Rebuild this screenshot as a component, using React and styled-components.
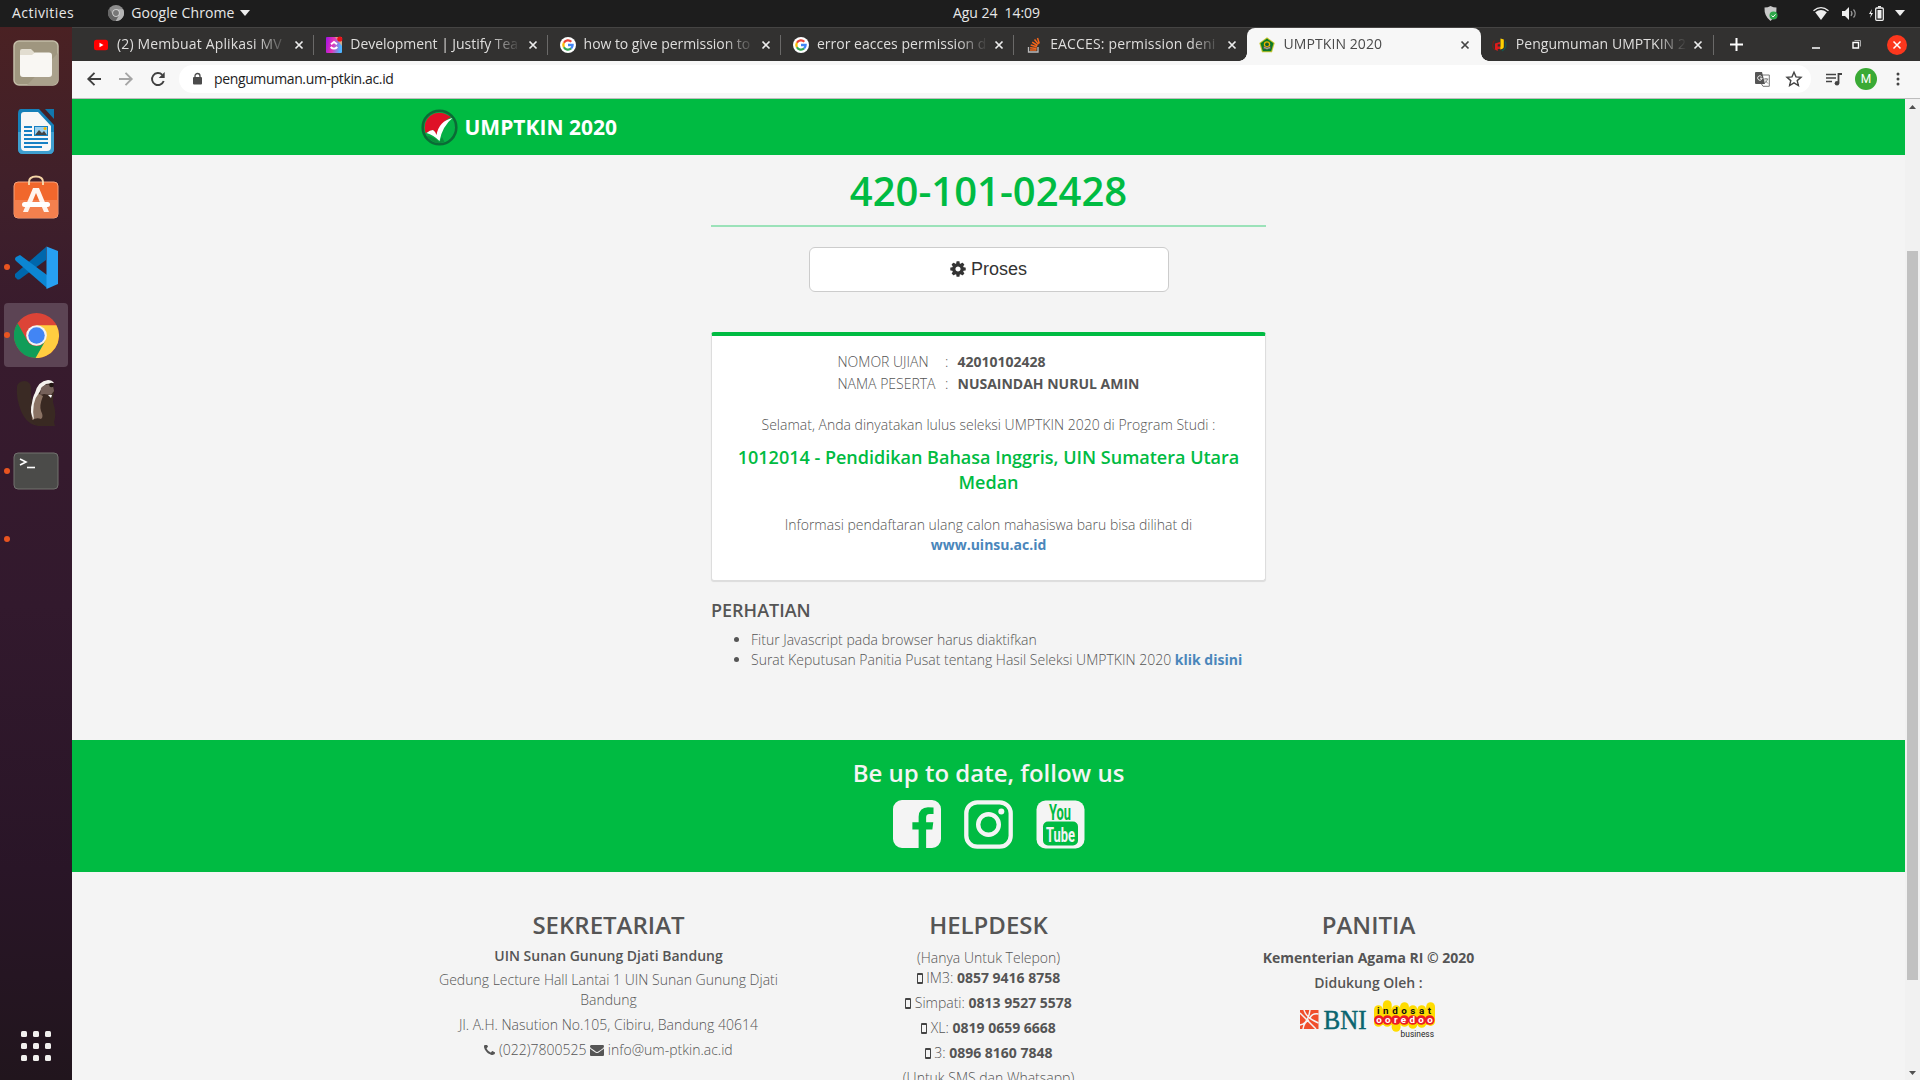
import React from "react";
import styled, { createGlobalStyle } from "styled-components";

const GREEN = "#00bb42";
const UI = '"Open Sans", "Noto Sans", sans-serif';

const Global = createGlobalStyle`
  * { box-sizing: border-box; }
  body { margin: 0; background: #1d1d1d; overflow: hidden; font-family: ${UI}; }
  p, h1, h2, h3, h4, ul { margin: 0; padding: 0; }
`;

/* ---------- desktop shell ---------- */
const Desktop = styled.div`
  width: 1920px; height: 1080px; display: flex; flex-direction: column; overflow: hidden;
`;
const TopBar = styled.header`
  height: 27px; flex: none; background: #1d1d1d; color: #e8e8e8;
  display: grid; grid-template-columns: 941px auto 1fr; align-items: center;
  font-size: 14px; line-height: 26px; padding: 0 13px 1px 12px;
`;
const TopLeft = styled.div`display: flex; align-items: center;`;
const TopRight = styled.div`display: flex; align-items: center; justify-content: flex-end; height: 26px;`;
const Label = styled.span`
  white-space: pre; letter-spacing: ${(p) => p.$track || 0}px; margin-left: ${(p) => p.$left || 0}px;
`;
const Glyph = styled.svg`
  display: block; flex: none; margin-left: ${(p) => p.$left || 0}px; overflow: visible;
`;
const Body = styled.div`flex: 1; display: flex; min-height: 0;`;

const Dock = styled.nav`
  width: 72px; flex: none; display: flex; flex-direction: column; padding-top: 2px;
  background: linear-gradient(180deg, #4a2123 0%, #40202a 15%, #381b2d 28%, #32192d 55%, #291527 80%, #21151d 100%);
`;
const Slot = styled.div`
  height: 68px; display: grid; grid-template-columns: 72px; justify-items: center; align-items: center;
  position: relative;
`;
const SlotFace = styled.div`
  width: 64px; height: 64px; border-radius: 4px; display: flex; align-items: center; justify-content: center;
  background: ${(p) => (p.$active ? "#5c4454" : "transparent")};
  padding-bottom: ${(p) => p.$lift || 0}px; padding-top: ${(p) => p.$drop || 0}px;
`;
const RunDot = styled.i`
  position: absolute; left: 4px; top: 31px; width: 6px; height: 6px; border-radius: 50%; background: #e95420;
`;
const AppGrid = styled.div`
  margin-top: auto; display: grid; grid-template-columns: repeat(3, 6px); gap: 6px;
  padding: 0 0 19px 21px;
`;
const AppDot = styled.i`width: 6px; height: 6px; border-radius: 1.5px; background: #f1f0ee;`;

/* ---------- browser ---------- */
const Browser = styled.div`flex: 1; display: flex; flex-direction: column; min-width: 0;`;
const TabStrip = styled.div`
  height: 34px; flex: none; background: #323130; border-top: 1px solid #454443;
  display: flex; padding-left: 9px;
`;
const TabBox = styled.div`
  width: 233.3px; height: 33px; flex: none; display: flex; align-items: center; position: relative;
  padding: 0 6px 0 ${(p) => p.$inset}px;
  color: ${(p) => (p.$active ? "#4a4a4a" : "#dfdedd")};
  background: ${(p) => (p.$active ? "#f7f7f7" : "transparent")};
  border-radius: 8px 8px 0 0;
  &::before, &::after {
    content: ""; display: ${(p) => (p.$active ? "block" : "none")};
    position: absolute; bottom: 0; width: 8px; height: 8px;
  }
  &::before { left: -8px; background: radial-gradient(circle at 0 0, transparent 7.5px, #f7f7f7 8px); }
  &::after { right: -8px; background: radial-gradient(circle at 100% 0, transparent 7.5px, #f7f7f7 8px); }
`;
const TabTitle = styled.span`
  flex: none; width: 174px; margin-left: 8px; white-space: nowrap; font-size: 14px; line-height: 30px;
  letter-spacing: ${(p) => p.$track || 0}px; height: 32px;
  mask-image: linear-gradient(90deg, #000 140px, transparent 171px);
`;
const TabDivider = styled.i`width: 1px; height: 20px; align-self: center; margin-left: -1px; background: #6a6968;`;
const WindowTools = styled.div`flex: 1; display: flex; align-items: center; padding: 0 13px 0 14px;`;

const Toolbar = styled.div`
  height: 38px; flex: none; background: #f7f7f7; border-bottom: 1px solid #bdbdbd;
  display: flex; align-items: center; padding: 0 14px 1px;
`;
const Omnibox = styled.div`
  height: 28px; flex: none; width: 1632px; margin-left: 14px; border-radius: 14px; background: #fff;
  display: flex; align-items: center; padding: 0 9px 0 12px; font-size: 14px; color: #222; line-height: 26px;
`;
const Push = styled.i`flex: 1;`;
const Avatar = styled.div`
  width: 22px; height: 22px; border-radius: 50%; background: #3aaa35; color: #fff;
  font: 12px/22px Roboto, sans-serif; text-align: center; margin-left: 13px;
`;

/* ---------- page ---------- */
const Viewport = styled.div`flex: 1; display: flex; min-height: 0;`;
const Page = styled.main`
  flex: 1; background: #f4f4f4; overflow: hidden; color: #555; display: flex; flex-direction: column;
  font: 300 14px/20px "Open Sans", sans-serif; align-items: center;
`;
const Band = styled.div`width: 100%; background: ${GREEN}; flex: none;`;
const NavBand = styled(Band)`
  height: 56px; display: flex; align-items: center; padding: 0 0 0 348.5px;
`;
const Brand = styled.span`
  color: #fff; font-weight: 700; font-size: 21px; line-height: 28px; margin: 0 0 0 7px;
`;
const Result = styled.section`width: 555px; height: 585px; flex: none; padding-top: 14px;`;
const ExamNo = styled.h1`
  font-size: 40px; line-height: 44px; font-weight: 600; color: ${GREEN}; text-align: center;
  padding-bottom: 12px; border-bottom: 2px solid #9be2b9; height: 58px;
`;
const ProcessButton = styled.button`
  display: flex; align-items: center; justify-content: center; gap: 4px;
  width: 360px; height: 45px; margin: 20px auto 0; padding: 0 1px 2px 0; border: 1px solid #ccc; border-radius: 6px;
  background: #fff; color: #333; font: 18px/24px "Liberation Sans", Arial, sans-serif;
`;
const Card = styled.div`
  height: 249px; margin-top: 40px; background: #fff; border-radius: 3px; border: 1px solid #ddd; border-top: 4px solid ${GREEN};
  box-shadow: 0 1px 1px rgba(0, 0, 0, 0.1); padding: 15px 20px 0; text-align: center;
`;
const Facts = styled.dl`
  display: grid; grid-template-columns: 107.5px 12.5px auto; grid-auto-rows: 22px; line-height: 22px;
  margin: 0 0 20px; padding-left: 105.5px; text-align: left;
`;
const Term = styled.dt``;
const Value = styled.dd`margin: 0; font-weight: 700;`;
const Program = styled.h4`
  font-size: 18px; line-height: 25px; font-weight: 600; color: ${GREEN}; margin: 10px -4px 20px;
`;
const Line = styled.p`
  line-height: 20px; margin-top: ${(p) => p.$top || 0}px; white-space: nowrap;
  font-weight: ${(p) => p.$weight || 300};
`;
const Link = styled.a`color: #4a86bb; font-weight: 700;`;
const Notice = styled.h4`font-size: 18px; line-height: 20px; font-weight: 600; margin: 19px 0 10px;`;
const Bullets = styled.ul`padding-left: 40px; line-height: 20px;`;

const SocialBand = styled(Band)`
  height: 132px; color: #f4f4f4; text-align: center; padding-top: 19px;
`;
const SocialTitle = styled.h3`font-size: 24px; line-height: 27px; font-weight: 600;`;
const SocialIcons = styled.div`display: flex; justify-content: center; gap: 23px; margin-top: 14px;`;

const Footer = styled.footer`
  width: 1140px; display: grid; grid-template-columns: repeat(3, 380px); padding-top: 39px; text-align: center; flex: none;
`;
const Col = styled.div``;
const ColTitle = styled.h3`font-size: 24px; line-height: 27px; font-weight: 600; margin-bottom: ${(p) => p.$gap}px;`;
const Strong = styled.b`font-weight: 700;`;
const InlineIcon = styled.svg`display: inline-block; vertical-align: ${(p) => p.$drop || -1}px;`;
const Logos = styled.div`display: flex; justify-content: center; align-items: flex-start; gap: 7px; margin: 7px 0 0 -3px;`;

const Scroll = styled.div`
  width: 15px; flex: none; background: #f1f1f1; display: flex; flex-direction: column; align-items: center;
  padding: 6px 0 5px;
`;
const Thumb = styled.i`width: 11px; height: 729px; margin: 142px 0 auto; background: #c1c1c1;`;

/* ---------- icons ---------- */
const Fa = ({ d, size }) => (
  <svg width={size} height={size} viewBox="0 0 1792 1792" fill="currentColor"><path d={d} /></svg>
);
const COG = "M1152 896q0-106-75-181t-181-75-181 75-75 181 75 181 181 75 181-75 75-181zm512-109v222q0 12-8 23t-20 13l-185 28q-19 54-39 91 35 50 107 138 10 12 10 25t-9 23q-27 37-99 108t-94 71q-12 0-26-9l-138-108q-44 23-91 38-16 136-29 186-7 28-36 28h-222q-14 0-24.5-8.5t-11.5-21.5l-28-184q-49-16-90-37l-141 107q-10 9-25 9-14 0-25-11-126-114-165-168-7-10-7-23 0-12 8-23 15-21 51-66.5t54-70.5q-27-50-41-99l-183-27q-13-2-21-12.5t-8-23.5v-222q0-12 8-23t19-13l186-28q14-46 39-92-40-57-107-138-10-12-10-24 0-10 9-23 26-36 98.5-107.5t94.5-71.5q13 0 26 10l138 107q44-23 91-38 16-136 29-186 7-28 36-28h222q14 0 24.5 8.5t11.5 21.5l28 184q49 16 90 37l142-107q9-9 24-9 13 0 25 10 129 119 165 170 7 8 7 22 0 12-8 23-15 21-51 66.5t-54 70.5q26 50 41 98l183 28q13 2 21 12.5t8 23.5z";
const FACEBOOK = "M1376 128q119 0 203.5 84.5t84.5 203.5v960q0 119-84.5 203.5t-203.5 84.5h-188v-595h199l30-232h-229v-148q0-56 23.5-84t91.5-28l122-1v-207q-63-9-178-9-136 0-217.5 80t-81.5 226v171h-200v232h200v595h-532q-119 0-203.5-84.5t-84.5-203.5v-960q0-119 84.5-203.5t203.5-84.5h960z";
const PHONE = "M1600 1240q0 27-10 70.5t-21 68.5q-21 50-122 106-94 51-186 51-27 0-53-3.5t-57.5-12.5-47-14.5-55.5-20.5-49-18q-98-35-175-83-127-79-264-216t-216-264q-48-77-83-175-3-9-18-49t-20.5-55.5-14.5-47-12.5-57.5-3.5-53q0-92 51-186 56-101 106-122 25-11 68.5-21t70.5-10q14 0 21 3 18 6 53 76 11 19 30 54t35 63.5 31 53.5q3 4 17.5 25t21.5 35.5 7 28.5q0 20-28.5 50t-62 55-62 53-28.5 46q0 9 5 22.5t8.5 20.5 14 24 11.5 19q76 137 174 235t235 174q2 1 19 11.5t24 14 20.5 8.5 22.5 5q18 0 46-28.5t53-62 55-62 50-28.5q14 0 28.5 7t35.5 21.5 25 17.5q25 15 53.5 31t63.5 35 54 30q70 35 76 53 3 7 3 21z";
const MAIL = "M1792 710v794q0 66-47 113t-113 47h-1472q-66 0-113-47t-47-113v-794q44 49 101 87 362 246 497 345 57 42 92.500 65.500t94.500 48 110 24.500h2q51 0 110-24.500t94.500-48 92.500-65.500q170-123 498-345 57-39 100-87zm0-294q0 79-49 151t-122 123q-376 261-468 325-10 7-42.500 31t-54 38.500-52 32.500-57.500 27-50 9h-2q-23 0-50-9t-57.500-27-52-32.500-54-38.500-42.500-31q-91-64-262-182.500t-205-142.500q-62-42-117-115.500t-55-136.500q0-78 41.500-130t118.500-52h1472q65 0 112.500 47t47.500 113z";

const Caret = ({ left }) => (
  <Glyph $left={left} width="10" height="6" viewBox="0 0 10 6"><path d="M0 0h10L5 6z" fill="#eee" /></Glyph>
);
const Close = ({ color = "#ececec", left = 4 }) => (
  <Glyph $left={left} width="8" height="8" viewBox="0 0 8 8"><path d="M.5.5l7 7M7.500.5l-7 7" stroke={color} strokeWidth="1.700" /></Glyph>
);
const GoogleG = () => (
  <Glyph width="16" height="16" viewBox="0 0 16 16">
    <circle cx="8" cy="8" r="8" fill="#fff" />
    <g fill="none" strokeWidth="2.300">
      <path d="M11.300 4.800A4.700 4.700 0 0 0 3.900 5.800" stroke="#ea4335" />
      <path d="M3.900 5.800a4.700 4.700 0 0 0 0 4.400" stroke="#fbbc05" />
      <path d="M3.900 10.200a4.700 4.700 0 0 0 7.200 1.200" stroke="#34a853" />
      <path d="M11.100 11.400A4.500 4.500 0 0 0 12.600 8H8" stroke="#4285f4" />
    </g>
  </Glyph>
);
const YouTubeTab = () => (
  <Glyph width="16" height="16" viewBox="0 0 16 16">
    <rect x="1" y="2.700" width="14" height="10.600" rx="2.500" fill="#f00" /><path d="M6.500 5.700v4.600l4-2.300z" fill="#fff" />
  </Glyph>
);
const ClickUp = () => (
  <Glyph width="16" height="16" viewBox="0 0 16 16">
    <defs><linearGradient id="cu" x1="0" x2="1" y2=".2"><stop offset="0" stopColor="#a012e8" /><stop offset=".5" stopColor="#e633b4" /><stop offset="1" stopColor="#4fb3ff" /></linearGradient></defs>
    <rect width="16" height="16" rx="1" fill="url(#cu)" />
    <path d="M9 0h7v9z" fill="#ffad5c" opacity=".7" />
    <path d="M5 7.300L8 4.900l3 2.400M4.700 10c2 2.200 4.600 2.200 6.600 0" fill="none" stroke="#fff" strokeWidth="1.900" />
    <circle cx="13.800" cy="2" r="2.600" fill="#e8131c" />
  </Glyph>
);
const StackOverflow = () => (
  <Glyph width="16" height="16" viewBox="0 0 16 16">
    <path d="M2.500 10v5h9.500v-5" fill="none" stroke="#bcbbbb" strokeWidth="1.300" />
    <path d="M4 13h6.500M4.100 10.700l6.500.7M4.700 8l6.200 1.800M6.200 5.200l5.300 3.300M8.500 2.600l4 4.700M11.500 1l1.800 5.500" stroke="#f4661b" strokeWidth="1.500" />
  </Glyph>
);
const Kemenag = () => (
  <Glyph width="16" height="16" viewBox="0 0 16 16">
    <path d="M8 .3l7.700 5.600-2.700 9.400H3L.3 5.900z" fill="#c8c72e" />
    <path d="M8 1.500l6.500 4.800-2.300 8H3.800l-2.300-8z" fill="#0b7a26" />
    <circle cx="8" cy="7.500" r="3.200" fill="#e8b400" /><circle cx="8" cy="7.300" r="1.900" fill="#16602a" />
    <path d="M4.500 9.500c2 .2 2.500.6 3.500 1.300 1-.7 1.500-1.100 3.500-1.300v2.200c-2 0-2.600.4-3.500 1-.9-.6-1.500-1-3.500-1z" fill="#a9a99c" stroke="#444" strokeWidth=".6" />
  </Glyph>
);
const Ptkin = () => (
  <Glyph width="16" height="16" viewBox="0 0 16 16">
    <path d="M2.500 3.500a6.500 6.500 0 0 0 .5 9.500" fill="none" stroke="#702018" strokeWidth="1.200" />
    <path d="M3 12.500V6.500L8 5v2.200H5.700v2.300H8.500V12H5.700v2z" fill="#e01b1b" />
    <path d="M8.500 1.500l3.300 1V9.500c0 1.700-1 2.700-3.500 2.900V10l.2-.6z" fill="#ffd000" />
    <path d="M13.300 4.500c1.500 4 .2 7.500-3.500 9.500" fill="none" stroke="#14584f" strokeWidth="1.200" />
  </Glyph>
);

const FilesIcon = () => (
  <svg width="46" height="46" viewBox="0 0 46 46">
    <rect x="1" y="1" width="44" height="44" rx="5" fill="#9f967f" stroke="#c4bda8" strokeWidth="1.500" />
    <path d="M45 13L14 45h26a5 5 0 0 0 5-5z" fill="#aaa18c" />
    <path d="M7 14V11q0-2 2-2h9l4 4h14v5H7z" fill="#e2ddd0" />
    <path d="M7 15h12l3-2.500h14q3 0 3 3V34q0 3-3 3H10q-3 0-3-3z" fill="#f9f7f3" />
  </svg>
);
const WriterIcon = () => (
  <svg width="40" height="46" viewBox="0 0 40 46">
    <path d="M5 0H23L38 16V40q0 5-5 5H7q-5 0-5-5V5q0-5 3-5z" fill="#1680b9" />
    <path d="M2 23h36v17q0 5-5 5H7q-5 0-5-5z" fill="#3f9fd0" />
    <path d="M8 3H22L35 17V38q0 4-4 4H9q-4 0-4-4V6q0-3 3-3z" fill="#f7f7f7" />
    <path d="M29 0h9v10z" fill="#1177ad" />
    <g fill="#1680c4"><path d="M8 17h8v2H8zM8 21h8v2H8zM8 25h8v2H8zM8 29h24v2H8zM8 33h24v2H8zM8 37h18v2H8z" /><rect x="18" y="17" width="14" height="10" /></g>
    <rect x="19" y="18" width="12" height="8" fill="#9cd0ee" /><path d="M19 26l4-5 3 3 2-2 3 4z" fill="#444" /><circle cx="29" cy="19.500" r="1.500" fill="#f6b900" />
  </svg>
);
const StoreIcon = () => (
  <svg width="46" height="46" viewBox="0 0 46 46">
    <rect x="1" y="8" width="44" height="36" rx="4" fill="#f1672c" stroke="#f7a37c" />
    <path d="M1.500 26h43v14q0 3.500-3.500 3.500H5q-3.500 0-3.500-3.500z" fill="#f4804e" />
    <path d="M16 11V8q0-5.500 7-5.500T30 8v3" fill="none" stroke="#f4d4a6" strokeWidth="2" />
    <path d="M20 14h6l10 24h-5L23 19l-8 19h-5z" fill="#fff4ee" /><rect x="9" y="28" width="28" height="5" rx="2.500" fill="#fff" />
  </svg>
);
const CodeIcon = () => (
  <svg width="43" height="43" viewBox="0 0 43 43">
    <path d="M0 31V28L31 1v13L5 33q-2 1-3 0z" fill="#0067ac" />
    <path d="M1 11l4-2 27 20v13L1 15q-2-2 0-4z" fill="#0c86d2" />
    <path d="M31.500.5L43 5v33l-11.500 5z" fill="#27a0f2" />
  </svg>
);
const ChromeIcon = ({ size, mono }) => {
  const c = mono ? ["#8d8d8d", "#666", "#b4b4b4", "#777", "#ddd"] : ["#dc4437", "#109d58", "#ffcd40", "#4285f4", "#f3f3f3"];
  return (
    <svg width={size} height={size} viewBox="0 0 48 48">
      <circle cx="24" cy="24" r="24" fill={c[0]} />
      <path d="M24 13H45.300A24 24 0 0 1 22 48L33 29z" fill={c[2]} />
      <path d="M3.800 11A24 24 0 0 0 23 48L33.500 29.500A11 11 0 0 1 14 29z" fill={c[1]} />
      <circle cx="24" cy="24" r="11" fill={c[4]} /><circle cx="24" cy="24" r="8.800" fill={c[3]} />
    </svg>
  );
};
const BeaverIcon = () => (
  <svg width="40" height="48" viewBox="0 0 40 48">
    <path d="M2 5Q4 2 9 2q6 1 6 7-1 9 3 16l5 22q-12-1-18-15Q0 19 1 8q0-2 1-3z" fill="#3a2a24" />
    <path d="M22 8q4-6 11-4 6 3 5 10-1 3-1 9 4 12 1 20l1 4H22q-10-5-7-18 2-9 7-21z" fill="#392922" />
    <path d="M21 14q-7 14-5 27 5-3 9-1 3-2 0-8-2-5 2-15z" fill="#8a7263" />
    <path d="M19 14Q22 2 32 1q4 0 6 3l-8 1q-4 3-7 9-8 9-5 27-5-8-2-17 1-7 3-10z" fill="#f5f2ee" />
    <path d="M25 9q5-6 12-2l1 5-3 4-7-1-4 1z" fill="#75615a" /><circle cx="35.500" cy="6" r="2.300" fill="#201612" /><path d="M32 16l4 0-1 3z" fill="#fff" />
  </svg>
);
const TermIcon = () => (
  <svg width="46" height="38" viewBox="0 0 46 38">
    <rect x="1" y="1" width="44" height="36" rx="4" fill="#4b4b49" stroke="#72726f" />
    <path d="M7 7l6 3-6 3" fill="none" stroke="#fff" strokeWidth="1.600" /><path d="M14 15.500h8" stroke="#fff" strokeWidth="1.600" />
  </svg>
);

const UmLogo = () => (
  <svg width="37" height="37" viewBox="0 0 37 37">
    <circle cx="18.500" cy="18.500" r="16.800" fill="#06b045" stroke="#0b6b36" strokeWidth="2.600" />
    <path d="M4.500 24Q1.500 13 9 7 18 0 30 8 20 13 15.500 26L12 21z" fill="#df1027" />
    <path d="M5.500 24q3.500-3 6.500-3Q15 23 15.500 26 18 12 31.500 9q-10 8-13 23-6-6-13-8z" fill="#fff" />
    <path d="M6 27q7 0 12.500 6.500L21 28l2.500 5Q13 37 6 27z" fill="#0b8a3a" />
  </svg>
);
const Instagram = () => (
  <svg width="49" height="49" viewBox="0 0 49 49" fill="none" stroke="#f4f4f4">
    <rect x="2.300" y="2.300" width="44.400" height="44.400" rx="11" strokeWidth="4.300" />
    <circle cx="24.500" cy="24.500" r="10.300" strokeWidth="4.400" /><circle cx="37.300" cy="11.600" r="3" fill="#f4f4f4" stroke="none" />
  </svg>
);
const YouTubeSquare = () => (
  <svg width="49" height="49" viewBox="0 0 49 49">
    <rect x="0.500" y="0.500" width="48" height="48" rx="9" fill="#f4f4f4" />
    <rect x="7" y="21.500" width="35" height="24" rx="5" fill={GREEN} />
    <g fontFamily="Roboto, sans-serif" fontWeight="700">
      <text x="13" y="19.500" fontSize="22" textLength="22" lengthAdjust="spacingAndGlyphs" fill={GREEN}>You</text>
      <text x="10" y="41.500" fontSize="21" textLength="29" lengthAdjust="spacingAndGlyphs" fill="#f4f4f4">Tube</text>
    </g>
  </svg>
);
const Mobile = () => (
  <InlineIcon $drop={-1} width="6" height="11" viewBox="0 0 6 11">
    <path fillRule="evenodd" d="M1 0h4q1 0 1 1v9q0 1-1 1H1q-1 0-1-1V1q0-1 1-1zM1 2v7h4V2z" fill="#444" />
  </InlineIcon>
);
const Bni = () => (
  <Glyph width="67" height="29" viewBox="0 -10 67 29">
    <rect width="18.500" height="19" fill="#f04e2b" />
    <path d="M0 3l16 16M4 0q2 8 14.500 13M0 15q8-1 10-15M9 10q-5 2-6 9M18.500 4q-7-1-9 5" stroke="#f4f4f4" strokeWidth="1.500" fill="none" />
    <text x="23.500" y="18.800" fontFamily="'Liberation Serif', serif" fontWeight="400" fontSize="28" textLength="43" lengthAdjust="spacingAndGlyphs" fill="#0a6570" stroke="#0a6570" strokeWidth=".5">BNI</text>
  </Glyph>
);
const Indosat = () => (
  <Glyph width="61" height="38" viewBox="0 0 62 38">
    <g fill="#ffdc00">
      {[[0, 5, 22], [9, 0, 27], [18, 5, 27], [26.5, 2, 25], [35, 5, 24], [44, 5, 23], [53, 2, 24]].map(([x, y, h]) => (
        <rect key={x} x={x} y={y} width="9" height={h} rx="4.500" />
      ))}
      <rect x="3" y="9" width="55" height="16" />
    </g>
    {[0, 1, 2, 3, 4, 5, 6].map((i) => <circle key={i} cx={5 + i * 8.600} cy="20" r="4.900" fill="#ed1c24" />)}
    <g fontFamily="Roboto, sans-serif" fontWeight="700">
      <text x="3" y="14" fontSize="10" textLength="55" fill="#111">indosat</text>
      <text x="2.200" y="23.300" fontSize="10" textLength="57.500" fill="#fff">ooredoo</text>
      <text x="27" y="36.800" fontSize="8.500" textLength="34" fontWeight="400" fill="#222">business</text>
    </g>
  </Glyph>
);

const tabs = [
  { title: "(2) Membuat Aplikasi MV", icon: <YouTubeTab />, inset: 12, track: 0.15 },
  { title: "Development | Justify Tea", icon: <ClickUp />, inset: 12, track: -0.05, closeLeft: 5 },
  { title: "how to give permission to", icon: <GoogleG />, inset: 12, track: -0.05 },
  { title: "error eacces permission d", icon: <GoogleG />, inset: 12, track: 0.02 },
  { title: "EACCES: permission deni", icon: <StackOverflow />, inset: 12, track: 0.15 },
  { title: "UMPTKIN 2020", icon: <Kemenag />, active: true, inset: 12, track: 0.08 },
  { title: "Pengumuman UMPTKIN 2", icon: <Ptkin />, inset: 11, track: 0.05 },
];
const dock = [
  { icon: <FilesIcon /> }, { icon: <WriterIcon />, drop: 1 }, { icon: <StoreIcon />, lift: 5 }, { icon: <CodeIcon />, run: true },
  { icon: <ChromeIcon size={45} />, run: true, active: true }, { icon: <BeaverIcon /> }, { icon: <TermIcon />, run: true }, { icon: null, run: true },
];
const phones = [["IM3:", "0857 9416 8758"], ["Simpati:", "0813 9527 5578"], ["XL:", "0819 0659 6668"], ["3:", "0896 8160 7848"]];

export default function App() {
  return (
    <Desktop>
      <Global />
      <TopBar>
        <TopLeft>
          <Label $track={0.45}>Activities</Label>
          <Glyph $left={34} width="16" height="16" viewBox="0 0 16 16"><ChromeIcon size={16} mono /></Glyph>
          <Label $left={7} $track={0.1}>Google Chrome</Label>
          <Caret left={5} />
        </TopLeft>
        <Label $track={-0.05}>{"Agu 24  14:09"}</Label>
        <TopRight>
          <Glyph width="14" height="15" viewBox="0 0 14 15">
            <path d="M6.500 0q3 1.500 6 1.500Q13 10 6.500 15 0 10 .5 1.500 4 1.500 6.500 0z" fill="#c9c9c9" /><circle cx="9.500" cy="9.500" r="4" fill="#2fa84a" /><path d="M7.600 9.500l1.500 1.500 2.400-2.700" stroke="#fff" fill="none" />
          </Glyph>
          <Glyph $left={35} width="16" height="13" viewBox="0 0 16 13"><path d="M.5 3.700Q8-2.500 15.500 3.700" fill="none" stroke="#eee" strokeWidth="1.300" /><path d="M2.200 5.200Q8 1 13.800 5.200L8 13z" fill="#eee" /></Glyph>
          <Glyph $left={13} width="15" height="13" viewBox="0 0 15 13"><path d="M0 4h3l4-4v13L3 9H0z" fill="#eee" /><path d="M9 4q2 2.500 0 5M11.500 2.500q3.500 4 0 8" fill="none" stroke="#999" strokeWidth="1.200" /></Glyph>
          <Glyph $left={12} width="15" height="15" viewBox="0 0 15 15"><path d="M3 3L0 8h2l-1 4 3-5H2z" fill="#eee" /><path d="M9 0h3v1.500H9z" fill="#eee" /><rect x="6.700" y="2" width="7.600" height="12.300" rx="1" fill="none" stroke="#eee" strokeWidth="1.300" /><path d="M8.500 4h4v8.500h-4z" fill="#eee" /></Glyph>
          <Caret left={11} />
          <Label $left={2} />
        </TopRight>
      </TopBar>
      <Body>
        <Dock>
          {dock.map((d, i) => (
            <Slot key={i}>{d.run && <RunDot />}<SlotFace $active={d.active} $lift={d.lift} $drop={d.drop}>{d.icon}</SlotFace></Slot>
          ))}
          <AppGrid>{Array.from({ length: 9 }, (_, i) => <AppDot key={i} />)}</AppGrid>
        </Dock>
        <Browser>
          <TabStrip>
            {tabs.map((t, i) => (
              <React.Fragment key={t.title}>
                <TabBox $active={t.active} $inset={t.inset}>
                  {t.icon}<TabTitle $track={t.track}>{t.title}</TabTitle><Close left={t.closeLeft} color={t.active ? "#444" : undefined} />
                </TabBox>
                {i !== 4 && i !== 5 && <TabDivider />}
              </React.Fragment>
            ))}
            <WindowTools>
              <Glyph $left={2} width="13" height="13" viewBox="0 0 13 13"><path d="M6.500 0v13M0 6.500h13" stroke="#fff" strokeWidth="2" /></Glyph>
              <Push />
              <Glyph width="8" height="10" viewBox="0 0 8 10"><path d="M0 8h8" stroke="#fff" strokeWidth="1.500" /></Glyph>
              <Glyph $left={32} width="9" height="9" viewBox="0 0 9 9"><path d="M1 2.500h5.500V8H1z" fill="none" stroke="#fff" strokeWidth="1.400" /><path d="M2.500.5h6v6" fill="none" stroke="#aaa" /></Glyph>
              <Glyph $left={26} width="20" height="20" viewBox="0 0 20 20"><circle cx="10" cy="10" r="10" fill="#fc371d" /><path d="M6.500 6.500l7 7m0-7l-7 7" stroke="#fff" strokeWidth="1.500" /></Glyph>
            </WindowTools>
          </TabStrip>
          <Toolbar>
            <Glyph $left={1} width="14" height="14" viewBox="0 0 14 14"><path d="M14 7H1.500M7.500.8L1.300 7l6.200 6.200" fill="none" stroke="#3f3f3f" strokeWidth="1.900" /></Glyph>
            <Glyph $left={18} width="14" height="14" viewBox="0 0 14 14"><path d="M0 7h12.500M6.500.8L12.700 7l-6.200 6.200" fill="none" stroke="#a5a5a5" strokeWidth="1.900" /></Glyph>
            <Glyph $left={18} width="14" height="14" viewBox="0 0 14 14"><path d="M12.700 9A6 6 0 1 1 11.300 2.800" fill="none" stroke="#3f3f3f" strokeWidth="1.900" /><path d="M13.700 0v6H7.700z" fill="#3f3f3f" /></Glyph>
            <Omnibox>
              <Glyph $left={2} width="9" height="12" viewBox="0 0 9 12"><rect y="4" width="9" height="7.500" rx="1" fill="#4b4b4b" /><path d="M2 5V3a2.500 2.500 0 0 1 5 0v2" fill="none" stroke="#4b4b4b" strokeWidth="1.300" /></Glyph>
              <Label $left={12} $track={-0.37}>pengumuman.um-ptkin.ac.id</Label>
              <Push />
              <Glyph width="15" height="15" viewBox="0 0 15 15">
                <path d="M6 3h8.300v11.300H8L6.500 12" fill="#fff" stroke="#777" /><path d="M0 1q0-1 1-1h6l3 12H1q-1 0-1-1z" fill="#555" />
                <path d="M6.500 4.500a2.200 2.200 0 1 0 .6 1.700H5" fill="none" stroke="#fff" /><path d="M8.800 7h4.500M11 6v1M12.500 7q-.5 3-3 4M10 8.500l3 3" fill="none" stroke="#777" strokeWidth=".9" />
              </Glyph>
              <Glyph $left={16} width="16" height="16" viewBox="0 0 16 16"><path d="M8 1.300l2 4.600 5 .4-3.800 3.300 1.200 4.900L8 11.900l-4.400 2.600 1.200-4.900L1 6.300l5-.4z" fill="none" stroke="#444" strokeWidth="1.400" /></Glyph>
            </Omnibox>
            <Glyph $left={15} width="16" height="13" viewBox="0 0 16 13"><path d="M0 1.500h10M0 5h10M0 8.500h6" stroke="#444" strokeWidth="1.700" /><path d="M12.500 10V1H16" fill="none" stroke="#444" strokeWidth="1.800" /><circle cx="11" cy="10.300" r="2.300" fill="#444" /></Glyph>
            <Avatar>M</Avatar>
            <Glyph $left={19} width="4" height="14" viewBox="0 0 4 14" fill="#444"><circle cx="2" cy="2" r="1.500" /><circle cx="2" cy="7" r="1.500" /><circle cx="2" cy="12" r="1.500" /></Glyph>
          </Toolbar>
          <Viewport>
            <Page>
              <NavBand><UmLogo /><Brand>UMPTKIN 2020</Brand></NavBand>
              <Result>
                <ExamNo>420-101-02428</ExamNo>
                <ProcessButton><Fa d={COG} size={18} />Proses</ProcessButton>
                <Card>
                  <Facts>
                    <Term>NOMOR UJIAN</Term><Term>:</Term><Value>42010102428</Value>
                    <Term>NAMA PESERTA</Term><Term>:</Term><Value>NUSAINDAH NURUL AMIN</Value>
                  </Facts>
                  <Line>Selamat, Anda dinyatakan lulus seleksi UMPTKIN 2020 di Program Studi :</Line>
                  <Program>1012014 - Pendidikan Bahasa Inggris, UIN Sumatera Utara<br />Medan</Program>
                  <Line>Informasi pendaftaran ulang calon mahasiswa baru bisa dilihat di</Line>
                  <Line><Link>www.uinsu.ac.id</Link></Line>
                </Card>
                <Notice>PERHATIAN</Notice>
                <Bullets>
                  <li>Fitur Javascript pada browser harus diaktifkan</li>
                  <li>Surat Keputusan Panitia Pusat tentang Hasil Seleksi UMPTKIN 2020 <Link>klik disini</Link></li>
                </Bullets>
              </Result>
              <SocialBand>
                <SocialTitle>Be up to date, follow us</SocialTitle>
                <SocialIcons>
                  <svg width="48" height="48" viewBox="128 128 1536 1536" fill="#f4f4f4"><path d={FACEBOOK} /></svg>
                  <Instagram />
                  <YouTubeSquare />
                </SocialIcons>
              </SocialBand>
              <Footer>
                <Col>
                  <ColTitle $gap={8}>SEKRETARIAT</ColTitle>
                  <Line $weight={600}>UIN Sunan Gunung Djati Bandung</Line>
                  <Line $top={4}>Gedung Lecture Hall Lantai 1 UIN Sunan Gunung Djati<br />Bandung</Line>
                  <Line $top={5}>Jl. A.H. Nasution No.105, Cibiru, Bandung 40614</Line>
                  <Line $top={5}>
                    <InlineIcon $drop={-1} width="11" height="11" viewBox="192 256 1408 1408" fill="#555"><path d={PHONE} /></InlineIcon>
                    {" (022)7800525 "}
                    <InlineIcon $drop={-2} width="14" height="13" viewBox="0 128 1792 1664" fill="#555"><path d={MAIL} /></InlineIcon>
                    {" info@um-ptkin.ac.id"}
                  </Line>
                </Col>
                <Col>
                  <ColTitle $gap={10}>HELPDESK</ColTitle>
                  <Line>(Hanya Untuk Telepon)</Line>
                  {phones.map(([n, v], i) => <Line key={n} $top={i ? 5 : 0}><Mobile /> {n} <Strong>{v}</Strong></Line>)}
                  <Line $top={5}>(Untuk SMS dan Whatsapp)</Line>
                </Col>
                <Col>
                  <ColTitle $gap={10}>PANITIA</ColTitle>
                  <Line $weight={700}>Kementerian Agama RI © 2020</Line>
                  <Line $top={5} $weight={600}>Didukung Oleh :</Line>
                  <Logos>
                    <Bni />
                    <Indosat />
                  </Logos>
                </Col>
              </Footer>
            </Page>
            <Scroll>
              <svg width="7" height="4"><path d="M0 4h7L3.500 0z" fill="#505050" /></svg>
              <Thumb />
              <svg width="7" height="4"><path d="M0 0h7L3.500 4z" fill="#505050" /></svg>
            </Scroll>
          </Viewport>
        </Browser>
      </Body>
    </Desktop>
  );
}
